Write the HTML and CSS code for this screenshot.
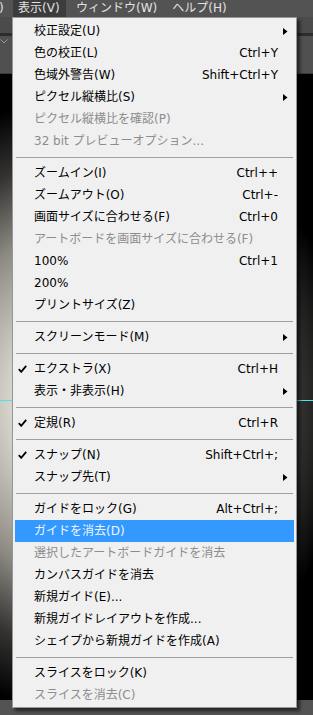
FILE: index.html
```html
<!DOCTYPE html>
<html lang="ja">
<head>
<meta charset="utf-8">
<title>表示メニュー</title>
<link rel="stylesheet" href="styles.css">
</head>
<body>
<div class="app">
  <div class="menubar">
    <span class="mb-item mb-cut">)</span>
    <span class="mb-item mb-active">表示(V)</span>
    <span class="mb-item">ウィンドウ(W)</span>
    <span class="mb-item">ヘルプ(H)</span>
  </div>
  <div class="workspace">
    <div class="toolbar"></div>
    <div class="toolbar-rule"></div>
    <div class="options"><svg class="chev" width="8" height="5" viewBox="0 0 8 5"><polyline points="0.5,0.5 4,4 7.5,0.5" fill="none" stroke="#9a9a9a" stroke-width="1"/></svg></div>
    <div class="canvas"><div class="guide"></div></div>
    <div class="statusbar"></div>
  </div>

  <div class="menu">
    <div class="row"><span class="chk"></span><span class="lbl">校正設定(U)</span><span class="sc"></span><span class="sub"><svg width="5" height="7" viewBox="0 0 5 7"><polygon points="0,0 4.5,3.5 0,7" fill="#000"/></svg></span></div>
    <div class="row"><span class="chk"></span><span class="lbl">色の校正(L)</span><span class="sc">Ctrl+Y</span><span class="sub"></span></div>
    <div class="row"><span class="chk"></span><span class="lbl">色域外警告(W)</span><span class="sc">Shift+Ctrl+Y</span><span class="sub"></span></div>
    <div class="row"><span class="chk"></span><span class="lbl">ピクセル縦横比(S)</span><span class="sc"></span><span class="sub"><svg width="5" height="7" viewBox="0 0 5 7"><polygon points="0,0 4.5,3.5 0,7" fill="#000"/></svg></span></div>
    <div class="row dis"><span class="chk"></span><span class="lbl">ピクセル縦横比を確認(P)</span><span class="sc"></span><span class="sub"></span></div>
    <div class="row dis"><span class="chk"></span><span class="lbl">32 bit プレビューオプション...</span><span class="sc"></span><span class="sub"></span></div>
    <div class="sep"></div>
    <div class="row"><span class="chk"></span><span class="lbl">ズームイン(I)</span><span class="sc">Ctrl++</span><span class="sub"></span></div>
    <div class="row"><span class="chk"></span><span class="lbl">ズームアウト(O)</span><span class="sc">Ctrl+-</span><span class="sub"></span></div>
    <div class="row"><span class="chk"></span><span class="lbl">画面サイズに合わせる(F)</span><span class="sc">Ctrl+0</span><span class="sub"></span></div>
    <div class="row dis"><span class="chk"></span><span class="lbl">アートボードを画面サイズに合わせる(F)</span><span class="sc"></span><span class="sub"></span></div>
    <div class="row"><span class="chk"></span><span class="lbl">100%</span><span class="sc">Ctrl+1</span><span class="sub"></span></div>
    <div class="row"><span class="chk"></span><span class="lbl">200%</span><span class="sc"></span><span class="sub"></span></div>
    <div class="row"><span class="chk"></span><span class="lbl">プリントサイズ(Z)</span><span class="sc"></span><span class="sub"></span></div>
    <div class="sep"></div>
    <div class="row"><span class="chk"></span><span class="lbl">スクリーンモード(M)</span><span class="sc"></span><span class="sub"><svg width="5" height="7" viewBox="0 0 5 7"><polygon points="0,0 4.5,3.5 0,7" fill="#000"/></svg></span></div>
    <div class="sep"></div>
    <div class="row"><span class="chk"><svg width="9" height="8" viewBox="0 0 9 8"><polyline points="0.8,4.2 3.2,6.8 8.2,0.8" fill="none" stroke="#000" stroke-width="1.8"/></svg></span><span class="lbl">エクストラ(X)</span><span class="sc">Ctrl+H</span><span class="sub"></span></div>
    <div class="row"><span class="chk"></span><span class="lbl">表示・非表示(H)</span><span class="sc"></span><span class="sub"><svg width="5" height="7" viewBox="0 0 5 7"><polygon points="0,0 4.5,3.5 0,7" fill="#000"/></svg></span></div>
    <div class="sep"></div>
    <div class="row"><span class="chk"><svg width="9" height="8" viewBox="0 0 9 8"><polyline points="0.8,4.2 3.2,6.8 8.2,0.8" fill="none" stroke="#000" stroke-width="1.8"/></svg></span><span class="lbl">定規(R)</span><span class="sc">Ctrl+R</span><span class="sub"></span></div>
    <div class="sep"></div>
    <div class="row"><span class="chk"><svg width="9" height="8" viewBox="0 0 9 8"><polyline points="0.8,4.2 3.2,6.8 8.2,0.8" fill="none" stroke="#000" stroke-width="1.8"/></svg></span><span class="lbl">スナップ(N)</span><span class="sc">Shift+Ctrl+;</span><span class="sub"></span></div>
    <div class="row"><span class="chk"></span><span class="lbl">スナップ先(T)</span><span class="sc"></span><span class="sub"><svg width="5" height="7" viewBox="0 0 5 7"><polygon points="0,0 4.5,3.5 0,7" fill="#000"/></svg></span></div>
    <div class="sep"></div>
    <div class="row"><span class="chk"></span><span class="lbl">ガイドをロック(G)</span><span class="sc">Alt+Ctrl+;</span><span class="sub"></span></div>
    <div class="row hl"><span class="chk"></span><span class="lbl">ガイドを消去(D)</span><span class="sc"></span><span class="sub"></span></div>
    <div class="row dis"><span class="chk"></span><span class="lbl">選択したアートボードガイドを消去</span><span class="sc"></span><span class="sub"></span></div>
    <div class="row"><span class="chk"></span><span class="lbl">カンバスガイドを消去</span><span class="sc"></span><span class="sub"></span></div>
    <div class="row"><span class="chk"></span><span class="lbl">新規ガイド(E)...</span><span class="sc"></span><span class="sub"></span></div>
    <div class="row"><span class="chk"></span><span class="lbl">新規ガイドレイアウトを作成...</span><span class="sc"></span><span class="sub"></span></div>
    <div class="row"><span class="chk"></span><span class="lbl">シェイプから新規ガイドを作成(A)</span><span class="sc"></span><span class="sub"></span></div>
    <div class="sep"></div>
    <div class="row"><span class="chk"></span><span class="lbl">スライスをロック(K)</span><span class="sc"></span><span class="sub"></span></div>
    <div class="row dis"><span class="chk"></span><span class="lbl">スライスを消去(C)</span><span class="sc"></span><span class="sub"></span></div>
  </div>
</div>
</body>
</html>
```

FILE: styles.css
```css
* { box-sizing: border-box; }
html, body { margin: 0; padding: 0; }
body {
  width: 313px;
  height: 715px;
  overflow: hidden;
  background: #000;
  font-family: "DejaVu Sans", "Noto Sans CJK JP", sans-serif;
  font-size: 12px;
}
.app {
  position: relative;
  width: 313px;
  height: 715px;
  display: flex;
  flex-direction: column;
}
.menubar {
  height: 17px;
  flex: none;
  background: #535353;
  display: flex;
  align-items: stretch;
  gap: 5px;
  color: #e2e2e2;
  white-space: nowrap;
  overflow: hidden;
}
.mb-item {
  display: flex;
  align-items: center;
  padding: 0 5px;
  line-height: 17px;
}
.mb-cut { width: 14px; padding: 0; margin-left: -1px; margin-right: -5px; }
.mb-active { background: #3c3c3c; width: 53px; }
.workspace {
  flex: 1;
  display: flex;
  flex-direction: column;
}
.toolbar {
  height: 16px;
  background: #4b4b4b;
}
.toolbar-rule { height: 3px; background: #2c2c2c; }
.options {
  height: 38px;
  background: #505050;
  border-bottom: 1px solid #3a3a3a;
  padding: 3px 0 0 0;
}
.chev { display: block; }
.canvas {
  flex: 1;
  position: relative;
  background: radial-gradient(ellipse 260px 310px at 90px 330px, #f6f5f1 0%, #d8d5cc 30%, #8d8a83 58%, #353433 80%, #000 100%);
}
.guide {
  position: absolute;
  left: 0; right: 0;
  top: 326px;
  height: 1px;
  background: #4fe3e6;
}
.statusbar { height: 15px; background: #535353; flex: none; }

.menu {
  position: absolute;
  left: 12px;
  top: 17px;
  width: 285px;
  background: #f0f0f0;
  border: 1px solid #979797;
  padding: 2px 2px 1px 2px;
  box-shadow: 3px 3px 3px rgba(0,0,0,0.55);
  color: #000;
}
.row {
  height: 22px;
  display: grid;
  grid-template-columns: 19px 1fr auto 16px;
  align-items: center;
  white-space: nowrap;
}
.chk { display: flex; align-items: center; justify-content: flex-start; padding-left: 3px; }
.chk svg { display: block; }
.lbl { line-height: 22px; }
.sc { line-height: 22px; text-align: right; }
.sub { display: flex; align-items: center; padding-left: 5px; }
.sub svg { display: block; }
.dis { color: #8d8d8d; }
.hl { background: #3399ff; color: #eef5ff; }
.sep {
  height: 10px;
  display: flex;
  align-items: center;
  padding: 0 1px;
}
.sep::before {
  content: "";
  display: block;
  width: 100%;
  height: 1px;
  background: #a0a0a0;
}
```
